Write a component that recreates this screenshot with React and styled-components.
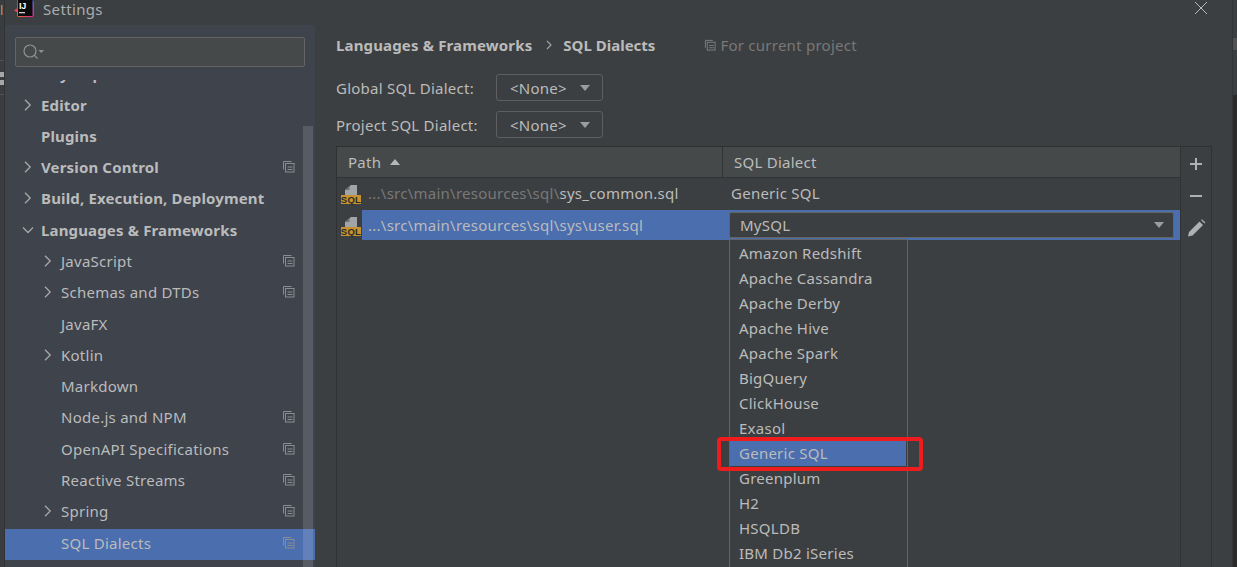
import React from 'react';
import styled, { createGlobalStyle } from 'styled-components';

const Global = createGlobalStyle`
  html, body { margin: 0; padding: 0; background: #3c3f41; }
  #root { width: 1237px; height: 567px; overflow: hidden; }
  * { box-sizing: border-box; }
`;
const Page = styled.div`
  position: relative; width: 1237px; height: 567px; overflow: hidden; display: flex;
  background: #3c3f41; color: #bbbbbb;
  font-family: "Noto Sans", "Open Sans", sans-serif; font-size: 15px; letter-spacing: .25px;
`;
const LeftEdge = styled.div`
  width: 5px; flex: none; background: #3a3d3f; border-right: 1px solid #313335; display: flex; flex-direction: column;
`;
const EdgeText = styled.div`
  height: 61px; border-bottom: 1px solid #505254; color: #b89a6a; font-size: 13px; overflow: hidden; line-height: 18px; padding-top: 1px;
`;
const EdgeIcon = styled.div`
  height: 34px; border-bottom: 1px solid #505254; display: flex; flex-direction: column; gap: 3px; padding-top: 11px;
  &::before, &::after { content: ''; display: block; height: 5px; width: 4px; background: #a4a6a8; }
`;
const Dialog = styled.div`
  flex: 1; min-width: 0; display: flex; flex-direction: column;
`;
const RightEdge = styled.div`
  width: 5px; flex: none; display: flex; flex-direction: column; background: #3c3f41; border-left: 1px solid #333537;
`;
const EdgeBlock = styled.div`
  height: ${p => p.$h}px; flex: ${p => (p.$h ? 'none' : 1)}; background: ${p => p.$c};
`;
const TitleBar = styled.div`
  height: 25px; flex: none; display: flex; align-items: flex-start; padding-left: 9px; gap: 9px; background: #3c3f41; position: relative;
`;
const TitleText = styled.span`
  font-size: 15px; line-height: 18px; color: #a9adad; letter-spacing: .35px;
`;
const Logo = styled.svg`
  width: 20px; height: 18px; flex: none;
`;
const Close = styled.svg`
  position: absolute; right: 24px; top: 1px; width: 14px; height: 14px;
`;
const Body = styled.div`
  flex: 1; min-height: 0; display: flex;
`;
const Sidebar = styled.aside`
  width: 310px; flex: none; background: #3e434c; position: relative; display: flex; flex-direction: column; padding-top: 12px; overflow: hidden;
`;
const SearchBox = styled.div`
  height: 30px; margin: 0 10px; flex: none; background: #45494a; border: 1px solid #646464; border-radius: 2px; display: flex; align-items: center; padding-left: 7px;
`;
const TreeClip = styled.div`
  height: 24px; flex: none; padding-top: 13px;
`;
const ClipWindow = styled.div`
  height: 4px; overflow: hidden;
`;
const Tree = styled.div`
  display: flex; flex-direction: column;
`;
const Row = styled.div`
  height: 31.29px; flex: none; display: flex; align-items: center; position: relative;
  padding-left: ${p => (p.$level ? 56 : 36)}px;
  padding-bottom: 4px;
  margin-top: ${p => p.$mt || 0}px;
  background: ${p => (p.$selected ? '#4b6eaf' : 'transparent')};
  font-weight: ${p => (p.$level ? 400 : 700)};
  letter-spacing: ${p => (p.$level ? '.25px' : '.15px')};
  font-size: 15px; color: #bbbbbb; white-space: nowrap;
`;
const Chevron = styled.svg`
  position: absolute; left: ${p => (p.$level ? 37 : 17)}px; top: 50%; margin-top: -8px; width: 12px; height: 12px;
  fill: none; stroke: #a8a8a8; stroke-width: 1.3;
`;
const CopyWrap = styled.svg`
  position: absolute; left: 277px; top: 50%; margin-top: -9px; width: 13px; height: 13px; fill: none; stroke: #8b8e90; stroke-width: 1;
`;
const Scrollbar = styled.div`
  position: absolute; left: 298px; top: 101px; bottom: 0; width: 10px; background: rgba(255,255,255,.13);
`;
const Content = styled.main`
  flex: 1; min-width: 0; padding: 7px 20px 0 21px; background: #3c3f41; display: flex; flex-direction: column; position: relative;
`;
const Breadcrumb = styled.div`
  height: 26px; flex: none; display: flex; align-items: center; font-weight: 700; font-size: 15px; letter-spacing: .15px; color: #bbbbbb;
`;
const Crumb = styled.svg`
  width: 10px; height: 10px; margin: 0 9px 0 12px; fill: none; stroke: #a0a0a0; stroke-width: 1.2;
`;
const SqlCrumb = styled.span`
  letter-spacing: 0;
`;
const ProjectNote = styled.span`
  display: flex; align-items: center; gap: 4px; margin-left: 49px; font-weight: 400; letter-spacing: .25px; color: #787878;
`;
const SmallCopy = styled.svg`
  width: 12px; height: 12px; fill: none; stroke: #808080; stroke-width: 1;
`;
const FormRows = styled.div`
  margin-top: 16px; display: flex; flex-direction: column; gap: 10px; flex: none;
`;
const FormRow = styled.div`
  display: flex; align-items: center; height: 27px;
`;
const Label = styled.span`
  width: 160px; flex: none; font-size: 15px; color: #bbbbbb;
`;
const Select = styled.div`
  width: 107px; height: 27px; border: 1px solid #5e6060; border-radius: 3px; display: flex; align-items: center; justify-content: space-between; padding: 0 12px 0 13px; color: #bbbbbb; font-size: 15px;
`;
const Caret = styled.i`
  display: block; width: 0; height: 0; border-left: 5.5px solid transparent; border-right: 5.5px solid transparent; border-top: 6px solid #9a9c9e;
`;
const TablePanel = styled.div`
  margin-top: 8px; flex: 1; display: flex; border: 1px solid #2f3133; border-bottom: 0; min-height: 0;
`;
const TableMain = styled.div`
  flex: 1; min-width: 0; display: flex; flex-direction: column;
`;
const Head = styled.div`
  height: 31px; flex: none; display: flex; background: #45494a; border-bottom: 1px solid #323232;
`;
const HeadCell = styled.div`
  width: ${p => p.$w}px; flex: ${p => (p.$w ? 'none' : 1)}; display: flex; align-items: center; gap: 9px; padding-left: 11px; color: #bbbbbb; font-size: 15px;
  border-right: ${p => (p.$w ? '1px solid #323232' : '0')};
`;
const SortUp = styled.i`
  display: block; width: 0; height: 0; border-left: 5.5px solid transparent; border-right: 5.5px solid transparent; border-bottom: 6px solid #b8b8b8;
`;
const TableRow = styled.div`
  height: 30px; flex: none; display: flex; align-items: center; margin-top: ${p => p.$mt || 0}px; position: relative;
`;
const FileIcon = styled.svg`
  width: 21px; height: 22px; flex: none; margin: 2px 0 0 4px;
`;
const PathCell = styled.div`
  width: 360px; flex: none; height: 30px; display: flex; align-items: center; padding-left: 6px; font-size: 15px; white-space: nowrap;
  background: ${p => (p.$selected ? '#4b6eaf' : 'transparent')};
  color: #bbbbbb;
`;
const Dim = styled.span`
  color: #787878;
`;
const DialectCell = styled.div`
  flex: 1; padding-left: 9px; font-size: 15px; color: #bbbbbb;
`;
const EditorCell = styled.div`
  flex: 1; height: 30px; background: #4b6eaf; padding: 2px 6px 2px 7px; display: flex;
`;
const Combo = styled.div`
  flex: 1; background: #3c3f41; border: 1px solid #646464; border-radius: 2px; display: flex; align-items: center; justify-content: space-between; padding: 0 9px 0 10px; font-size: 15px;
`;
const SideTools = styled.div`
  width: 31px; flex: none; border-left: 1px solid #323232; display: flex; flex-direction: column; align-items: center; padding-top: 7px; gap: 12px;
`;
const ToolIcon = styled.svg`
  width: 20px; height: 20px; fill: #afb1b3;
`;
const Popup = styled.div`
  position: absolute; left: 414px; top: 214px; bottom: 0; width: 179px; background: #3c3f41; border: 1px solid #646464; border-bottom: 0; padding: 1px 1px 0 0; display: flex; flex-direction: column; overflow: hidden;
`;
const PopupItem = styled.div`
  height: 25px; flex: none; display: flex; align-items: center; padding: 0 0 2px 9px; font-size: 15px; color: #bbbbbb;
  background: ${p => (p.$selected ? '#4b6eaf' : 'transparent')};
`;
const RedMark = styled.div`
  position: absolute; left: 402px; top: 412px; width: 206px; height: 34px; border: 4px solid #ee1c1c; border-radius: 4px;
`;

const Copy = ({ as: C = CopyWrap }) => (
  <C viewBox="0 0 13 13">
    <path d="M9.5 1.5h-8v8" />
    <rect x="3.5" y="3.5" width="8.5" height="8.5" />
    <path d="M5.5 7h5M5.5 9.5h5" />
  </C>
);

const treeItems = [
  ['Editor', 0, true, false],
  ['Plugins', 0, false, false],
  ['Version Control', 0, true, true],
  ['Build, Execution, Deployment', 0, true, false],
  ['Languages & Frameworks', 0, 'open', false],
  ['JavaScript', 1, true, true],
  ['Schemas and DTDs', 1, true, true],
  ['JavaFX', 1, false, false],
  ['Kotlin', 1, true, false],
  ['Markdown', 1, false, false],
  ['Node.js and NPM', 1, false, true],
  ['OpenAPI Specifications', 1, false, true],
  ['Reactive Streams', 1, false, true],
  ['Spring', 1, true, true],
  ['SQL Dialects', 1, false, true],
];

const dialects = ['Amazon Redshift', 'Apache Cassandra', 'Apache Derby', 'Apache Hive', 'Apache Spark', 'BigQuery', 'ClickHouse', 'Exasol', 'Generic SQL', 'Greenplum', 'H2', 'HSQLDB', 'IBM Db2 iSeries'];

const SqlFile = () => (
  <FileIcon viewBox="0 0 21 22">
    <path d="M4 12V7l6-5h6v10z" fill="#a2a5a7" />
    <path d="M4 7h4.5V3z" fill="#6f7274" />
    <rect x="0" y="12" width="20" height="9" fill="#c6912e" />
    <text x="10" y="20" textAnchor="middle" fontSize="9.5" fontWeight="700" letterSpacing=".3" fontFamily="Liberation Sans" fill="#2b2b2b">SQL</text>
  </FileIcon>
);

export default function App() {
  return (
    <Page>
      <Global />
      <LeftEdge>
        <EdgeText>l</EdgeText>
        <EdgeIcon />
      </LeftEdge>
      <Dialog>
        <TitleBar>
          <Logo viewBox="0 0 20 18">
            <defs>
              <linearGradient id="lg" x1="0" y1="1" x2="1" y2="0">
                <stop offset="0" stopColor="#f97a12" />
                <stop offset=".45" stopColor="#e3268c" />
                <stop offset="1" stopColor="#3d6df0" />
              </linearGradient>
            </defs>
            <path d="M3 0h14q3 0 3 3v12q0 2-3 2H5q-2 0-2-2v-3l-3-1.5 3-2z" fill="url(#lg)" />
            <rect x="4" y="0" width="14.5" height="16" fill="#0b0b0b" />
            <text x="5" y="8.5" fontSize="9" fontWeight="700" letterSpacing="-.3" fontFamily="Liberation Sans" fill="#fff">IJ</text>
            <rect x="5" y="12" width="6" height="1.3" fill="#cfcfcf" />
          </Logo>
          <TitleText>Settings</TitleText>
          <Close viewBox="0 0 14 14" fill="none" stroke="#b9bbbd" strokeWidth="1">
            <path d="M1 1l12 12M13 1L1 13" />
          </Close>
        </TitleBar>
        <Body>
          <Sidebar>
            <SearchBox>
              <svg width="24" height="18" viewBox="0 0 24 18" fill="none" stroke="#8f9294" strokeWidth="1.2">
                <circle cx="7" cy="8" r="6" />
                <path d="M11.2 12.2l3.3 3.3" />
                <path d="M15.5 7h5.5l-2.75 3z" fill="#8f9294" stroke="none" />
              </svg>
            </SearchBox>
            <TreeClip>
              <ClipWindow>
                <Row $mt={-20}>Keymap</Row>
              </ClipWindow>
            </TreeClip>
            <Tree>
              {treeItems.map(([label, level, arrow, copy]) => (
                <Row key={label} $level={level} $selected={label === 'SQL Dialects'}>
                  {arrow && (
                    <Chevron $level={level} viewBox="0 0 12 12">
                      {arrow === 'open' ? <path d="M1 3.5l5 5 5-5" /> : <path d="M3 .8l5.2 5.2L3 11.2" />}
                    </Chevron>
                  )}
                  {label}
                  {copy && <Copy />}
                </Row>
              ))}
            </Tree>
            <Scrollbar />
          </Sidebar>
          <Content>
            <Breadcrumb>
              Languages &amp; Frameworks
              <Crumb viewBox="0 0 10 10"><path d="M3 1l4 4-4 4" /></Crumb>
              <SqlCrumb>SQL Dialects</SqlCrumb>
              <ProjectNote><Copy as={SmallCopy} />For current project</ProjectNote>
            </Breadcrumb>
            <FormRows>
              <FormRow><Label>Global SQL Dialect:</Label><Select>&lt;None&gt;<Caret /></Select></FormRow>
              <FormRow><Label>Project SQL Dialect:</Label><Select>&lt;None&gt;<Caret /></Select></FormRow>
            </FormRows>
            <TablePanel>
              <TableMain>
                <Head>
                  <HeadCell $w={386}>Path<SortUp /></HeadCell>
                  <HeadCell>SQL Dialect</HeadCell>
                </Head>
                <TableRow>
                  <SqlFile />
                  <PathCell><Dim>...\src\main\resources\sql\</Dim>sys_common.sql</PathCell>
                  <DialectCell>Generic SQL</DialectCell>
                </TableRow>
                <TableRow $mt={2}>
                  <SqlFile />
                  <PathCell $selected>...\src\main\resources\sql\sys\user.sql</PathCell>
                  <EditorCell><Combo>MySQL<Caret /></Combo></EditorCell>
                </TableRow>
              </TableMain>
              <SideTools>
                <ToolIcon viewBox="0 0 20 20"><path d="M9 4h2v5h5v2h-5v5H9v-5H4V9h5z" /></ToolIcon>
                <ToolIcon viewBox="0 0 20 20"><rect x="4" y="9" width="12" height="2" /></ToolIcon>
                <ToolIcon viewBox="0 0 20 20"><path d="M13.5 3.5l3.5 3.5L6.5 17.5 2 18.5l1-4.5zM15 2l1-.8 3.3 3.3-.8 1z" /></ToolIcon>
              </SideTools>
            </TablePanel>
            <Popup>
              {dialects.map(d => <PopupItem key={d} $selected={d === 'Generic SQL'}>{d}</PopupItem>)}
            </Popup>
            <RedMark />
          </Content>
        </Body>
      </Dialog>
      <RightEdge>
        <EdgeBlock $h={25} $c="#3c3f41" />
        <EdgeBlock $h={13} $c="#3c3f41" />
        <EdgeBlock $h={12} $c="#505254" />
        <EdgeBlock $h={45} $c="#3c3f41" />
        <EdgeBlock $c="#2b2b2b" />
      </RightEdge>
    </Page>
  );
}
